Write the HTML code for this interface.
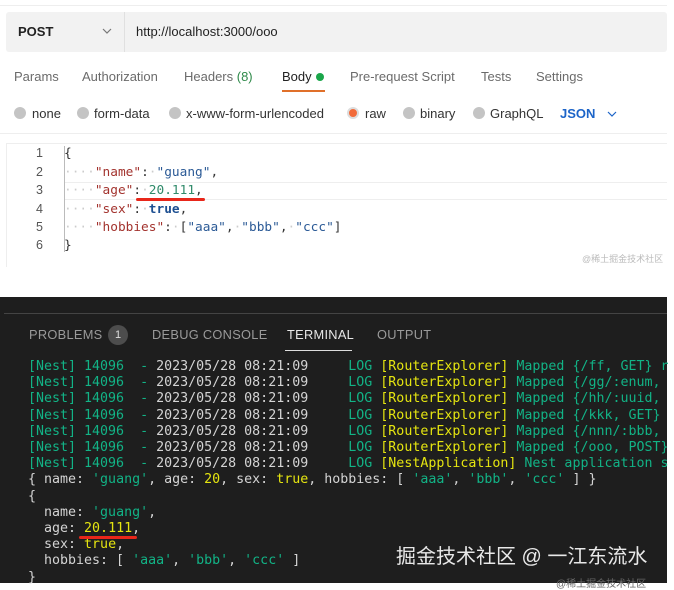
<!DOCTYPE html>
<html><head><meta charset="utf-8"><style>
*{margin:0;padding:0;box-sizing:border-box}
body{width:674px;height:583px;background:#fff;position:relative;overflow:hidden;font-family:"Liberation Sans",sans-serif}
.a{position:absolute;white-space:pre}
.mono{font-family:"DejaVu Sans Mono","Liberation Mono",monospace}
.tab{font-size:13px;color:#6b6b6b;top:69px}
.rad{top:106px;font-size:13px;color:#333}
.dot{position:absolute;width:12px;height:12px;border-radius:50%;background:#c4c4c4;top:107px}
.ln{font-size:12.5px;color:#555;left:36px}
.cd{font-size:12.8px;left:64px;color:#333}
.k{color:#a3332e}.s{color:#2b5a96}.n{color:#2f8a6a}.b{color:#1d4f91;font-weight:bold}.ws{color:#ccc}
.t{font-size:13.3px;line-height:16.2px;color:#d4d4d4;left:28px;top:359px}
.g{color:#12b386}.y{color:#e5e510}
</style></head><body>
<div class="a" style="left:0;top:5px;width:667px;height:1px;background:#eee"></div>
<div class="a" style="left:6px;top:12px;width:661px;height:40px;background:#f2f2f2;border-radius:3px"></div>
<div class="a" style="left:124px;top:12px;width:1px;height:40px;background:#e0e0e0"></div>
<div class="a" style="left:18px;top:24px;font-size:13px;font-weight:bold;color:#222">POST</div>
<svg class="a" style="left:102px;top:28px" width="10" height="7"><path d="M1 1L5 5L9 1" stroke="#777" fill="none" stroke-width="1.2"/></svg>
<div class="a" style="left:136px;top:24px;font-size:13px;color:#222">http://localhost:3000/ooo</div>
<div class="a tab" style="left:14px">Params</div>
<div class="a tab" style="left:82px">Authorization</div>
<div class="a tab" style="left:184px">Headers <span style="color:#2f8a4a">(8)</span></div>
<div class="a tab" style="left:282px;color:#222">Body</div>
<div class="a" style="left:316px;top:73px;width:8px;height:8px;border-radius:50%;background:#1aa64a"></div>
<div class="a" style="left:282px;top:90px;width:43px;height:2px;background:#e0702a"></div>
<div class="a tab" style="left:350px">Pre-request Script</div>
<div class="a tab" style="left:481px">Tests</div>
<div class="a tab" style="left:536px">Settings</div>
<div class="dot" style="left:14px"></div><div class="a rad" style="left:32px">none</div>
<div class="dot" style="left:77px"></div><div class="a rad" style="left:94px">form-data</div>
<div class="dot" style="left:169px"></div><div class="a rad" style="left:186px">x-www-form-urlencoded</div>
<div class="dot" style="left:347px;background:#f26b3a;border:2px solid #ddd"></div><div class="a rad" style="left:365px">raw</div>
<div class="dot" style="left:403px"></div><div class="a rad" style="left:420px">binary</div>
<div class="dot" style="left:473px"></div><div class="a rad" style="left:490px">GraphQL</div>
<div class="a rad" style="left:560px;color:#1c64c8;font-weight:bold">JSON</div>
<svg class="a" style="left:607px;top:111px" width="10" height="7"><path d="M1 1L5 5L9 1" stroke="#1c64c8" fill="none" stroke-width="1.2"/></svg>
<div class="a" style="left:0;top:133px;width:667px;height:1px;background:#eee"></div>
<div class="a" style="left:6px;top:143px;width:661px;height:1px;background:#eee"></div>
<div class="a" style="left:6px;top:143px;width:1px;height:124px;background:#eee"></div>
<div class="a" style="left:64px;top:146px;width:1px;height:106px;background:#bbb"></div>
<div class="a" style="left:65px;top:182px;width:602px;height:18px;border-top:1px solid #eee;border-bottom:1px solid #eee"></div>
<div class="a ln" style="top:146px">1</div><div class="a ln" style="top:165px">2</div><div class="a ln" style="top:183px">3</div><div class="a ln" style="top:202px">4</div><div class="a ln" style="top:220px">5</div><div class="a ln" style="top:238px">6</div>
<div class="a mono cd" style="top:146px">{</div>
<div class="a mono cd" style="top:165px"><span class="ws">····</span><span class="k">"name"</span>:<span class="ws">·</span><span class="s">"guang"</span>,</div>
<div class="a mono cd" style="top:183px"><span class="ws">····</span><span class="k">"age"</span>:<span class="ws">·</span><span class="n">20.111</span>,</div>
<div class="a mono cd" style="top:202px"><span class="ws">····</span><span class="k">"sex"</span>:<span class="ws">·</span><span class="b">true</span>,</div>
<div class="a mono cd" style="top:220px"><span class="ws">····</span><span class="k">"hobbies"</span>:<span class="ws">·</span>[<span class="s">"aaa"</span>,<span class="ws">·</span><span class="s">"bbb"</span>,<span class="ws">·</span><span class="s">"ccc"</span>]</div>
<div class="a mono cd" style="top:238px">}</div>
<div class="a" style="left:136px;top:198px;width:69px;height:3px;background:#e8261a;border-radius:2px"></div>
<div class="a" style="left:582px;top:252px;font-size:9px;color:#bbb;font-family:'Liberation Sans','Noto Sans CJK SC',sans-serif">@稀土掘金技术社区</div>

<div class="a" style="left:0;top:297px;width:667px;height:286px;background:#1e1e1e"></div>
<div class="a" style="left:4px;top:313px;width:663px;height:1px;background:#444"></div>
<div class="a" style="left:29px;top:327px;font-size:12.8px;color:#9a9a9a;letter-spacing:.3px">PROBLEMS</div>
<div class="a" style="left:108px;top:325px;width:20px;height:20px;border-radius:50%;background:#4d4d4d;color:#ddd;font-size:11px;text-align:center;line-height:20px">1</div>
<div class="a" style="left:152px;top:327px;font-size:12.8px;color:#9a9a9a;letter-spacing:.3px">DEBUG CONSOLE</div>
<div class="a" style="left:287px;top:327px;font-size:12.8px;color:#e7e7e7;letter-spacing:.3px">TERMINAL</div>
<div class="a" style="left:285px;top:350px;width:67px;height:1px;background:#ddd"></div>
<div class="a" style="left:377px;top:327px;font-size:12.8px;color:#9a9a9a;letter-spacing:.3px">OUTPUT</div>
<div class="a mono t"><span class="g">[Nest] 14096</span>  <span class="g">-</span> 2023/05/28 08:21:09     <span class="g">LOG</span> <span class="y">[RouterExplorer]</span> <span class="g">Mapped {/ff, GET} r</span>
<span class="g">[Nest] 14096</span>  <span class="g">-</span> 2023/05/28 08:21:09     <span class="g">LOG</span> <span class="y">[RouterExplorer]</span> <span class="g">Mapped {/gg/:enum,</span>
<span class="g">[Nest] 14096</span>  <span class="g">-</span> 2023/05/28 08:21:09     <span class="g">LOG</span> <span class="y">[RouterExplorer]</span> <span class="g">Mapped {/hh/:uuid,</span>
<span class="g">[Nest] 14096</span>  <span class="g">-</span> 2023/05/28 08:21:09     <span class="g">LOG</span> <span class="y">[RouterExplorer]</span> <span class="g">Mapped {/kkk, GET}</span>
<span class="g">[Nest] 14096</span>  <span class="g">-</span> 2023/05/28 08:21:09     <span class="g">LOG</span> <span class="y">[RouterExplorer]</span> <span class="g">Mapped {/nnn/:bbb,</span>
<span class="g">[Nest] 14096</span>  <span class="g">-</span> 2023/05/28 08:21:09     <span class="g">LOG</span> <span class="y">[RouterExplorer]</span> <span class="g">Mapped {/ooo, POST}</span>
<span class="g">[Nest] 14096</span>  <span class="g">-</span> 2023/05/28 08:21:09     <span class="g">LOG</span> <span class="y">[NestApplication]</span> <span class="g">Nest application s</span>
{ name: <span class="g">'guang'</span>, age: <span class="y">20</span>, sex: <span class="y">true</span>, hobbies: [ <span class="g">'aaa'</span>, <span class="g">'bbb'</span>, <span class="g">'ccc'</span> ] }
{
  name: <span class="g">'guang'</span>,
  age: <span class="y">20.111</span>,
  sex: <span class="y">true</span>,
  hobbies: [ <span class="g">'aaa'</span>, <span class="g">'bbb'</span>, <span class="g">'ccc'</span> ]
}</div>
<div class="a" style="left:79px;top:536px;width:58px;height:3px;background:#e8261a;border-radius:2px"></div>
<div class="a" style="left:396px;top:540px;font-size:20px;color:#e8e8e8;font-family:'Liberation Sans','Noto Sans CJK SC',sans-serif">掘金技术社区 @ 一江东流水</div>
<div class="a" style="left:556px;top:575px;font-size:10px;color:#666;font-family:'Liberation Sans','Noto Sans CJK SC',sans-serif">@稀土掘金技术社区</div>
</body></html>
